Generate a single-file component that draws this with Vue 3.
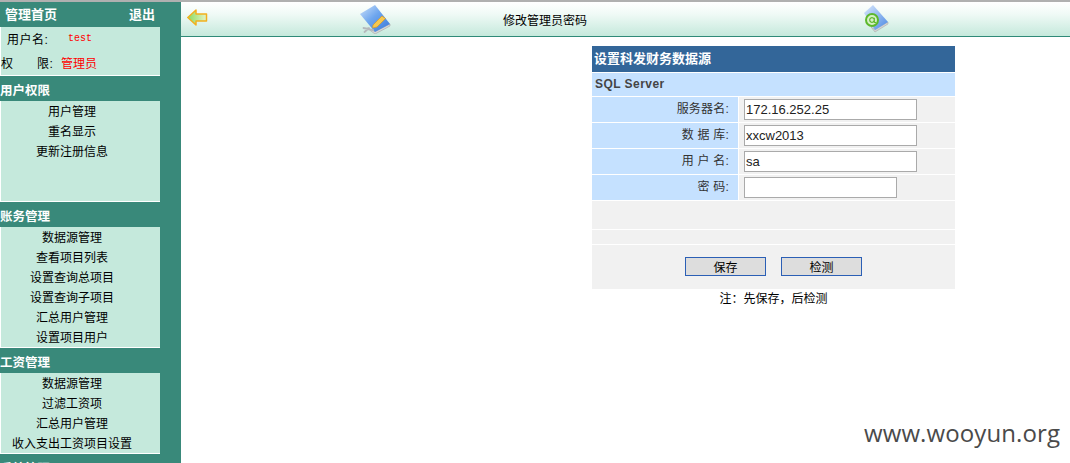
<script setup>
const groups = [
  { title: '用户权限', items: ['用户管理', '重名显示', '更新注册信息'], extra: true },
  { title: '账务管理', items: ['数据源管理', '查看项目列表', '设置查询总项目', '设置查询子项目', '汇总用户管理', '设置项目用户'] },
  { title: '工资管理', items: ['数据源管理', '过滤工资项', '汇总用户管理', '收入支出工资项目设置'] },
]
const rows = [
  { label: '服务器名:', value: '172.16.252.25' },
  { label: '数 据 库:', value: 'xxcw2013' },
  { label: '用 户 名:', value: 'sa' },
  { label: '密 码:', value: '', short: true, type: 'password' },
]
const note = '注\uFF1A先保存\uFF0C后检测'
</script>

<template>
  <div class="page">
    <aside class="side">
      <div class="home"><span>管理首页</span><span>退出</span></div>
      <div class="panel who">
        <div class="who-row"><span class="who-label">用户名:</span><span class="test">test</span></div>
        <div class="who-row"><span class="quan">权</span><span class="xian">限:</span><span class="role">管理员</span></div>
      </div>
      <template v-for="g in groups" :key="g.title">
        <div class="group-title">{{ g.title }}</div>
        <div class="panel" :class="{ extra: g.extra }">
          <div v-for="(it, i) in g.items" :key="i" class="link">{{ it }}</div>
        </div>
      </template>
      <div class="group-title">系统管理</div>
    </aside>

    <div class="right">
      <header class="bar">
        <svg class="arrow" width="21" height="18" viewBox="0 0 21 18">
          <defs>
            <linearGradient id="ag" x1="0" x2="1" y1="0" y2="0">
              <stop offset="0" stop-color="#8edb62" /><stop offset="1" stop-color="#e4f4c6" />
            </linearGradient>
          </defs>
          <path d="M.8 8.5 L9 1 V5 H19.5 V12 H9 V16 Z" fill="url(#ag)" stroke="#f2b01e" stroke-width="1.5" stroke-linejoin="round" />
        </svg>
        <svg class="book" width="31" height="30" viewBox="0 -1 31 30">
          <defs>
            <linearGradient id="b1" x1="0" x2="1" y1="0" y2="1">
              <stop offset="0" stop-color="#cfe2fa" /><stop offset=".45" stop-color="#6ea6ee" /><stop offset="1" stop-color="#3a78d8" />
            </linearGradient>
          </defs>
          <path d="M7 23 L15 29 L30 21 L30 19 L15 26.5 Z" fill="#d8d8d8" stroke="#a5a5a5" stroke-width=".6" />
          <path d="M0 9 L15 0 L30 19 L15 27 Z" fill="url(#b1)" />
          <path d="M13 20 L22 11 L25.5 13.5 L17 22 L12.5 23 Z" fill="#f6c850" stroke="#d89a24" stroke-width=".7" />
          <path d="M3.5 23 L13 25 M4.5 27 L9 23" stroke="#b4b8bc" stroke-width="1.8" stroke-linecap="round" fill="none" />
        </svg>
        <span class="bar-title">修改管理员密码</span>
        <svg class="book2" width="28" height="28" viewBox="0 0 28 28">
          <defs>
            <linearGradient id="b2" x1="0" x2="1" y1="0" y2="1">
              <stop offset="0" stop-color="#dbe9fc" /><stop offset="1" stop-color="#4a88e4" />
            </linearGradient>
          </defs>
          <path d="M8 22 L12 27 L25 19 L25 17 L12 24.5 Z" fill="#d4d4d4" stroke="#a0a0a0" stroke-width=".5" />
          <path d="M1 8 L10 0 L25 17 L12 25 Z" fill="url(#b2)" />
          <circle cx="9" cy="15" r="6" fill="#d6efc6" stroke="#5cb82c" stroke-width="2" />
          <path d="M11.3 12.8 V16.5 Q11.3 18 13 17.3 M11.3 15 A2.3 2.3 0 1 1 11.3 14.9" fill="none" stroke="#5cb82c" stroke-width="1.2" />
        </svg>
      </header>

      <main class="main">
        <section class="form">
          <div class="form-head">设置科发财务数据源</div>
          <div class="form-sub">SQL Server</div>
          <div v-for="r in rows" :key="r.label" class="row">
            <label class="label">{{ r.label }}</label>
            <div class="value">
              <input class="field" :class="{ short: r.short }" :type="r.type || 'text'" :value="r.value" />
            </div>
          </div>
          <div class="blank b1"></div>
          <div class="blank b2"></div>
          <div class="actions">
            <button class="btn" type="button">保存</button>
            <button class="btn" type="button">检测</button>
          </div>
          <p class="note">{{ note }}</p>
        </section>
      </main>
    </div>

    <div class="mark">www.wooyun.org</div>
  </div>
</template>

<style>
html, body { margin: 0; background: #fff; overflow: hidden; }
</style>

<style scoped>
.page {
  position: relative;
  display: flex;
  width: 1070px;
  height: 463px;
  overflow: hidden;
  font-family: "Liberation Sans", "Noto Sans CJK SC", sans-serif;
  font-size: 12px;
  color: #000;
  background: #fff;
  border-top: 2px solid #b0b0b0;
  box-sizing: border-box;
}
.side {
  flex: none;
  width: 181px;
  background: #39897a;
  overflow: hidden;
}
.home {
  display: flex;
  justify-content: space-between;
  height: 25px;
  line-height: 25px;
  padding: 0 26px 0 5px;
  color: #fff;
  font-size: 13px;
  font-weight: 700;
}
.panel {
  width: 142px;
  background: #c5e9dc;
  border-left: 1px solid #fff;
  border-bottom: 1px solid #fff;
  padding-right: 17px;
}
.panel.extra { height: 100px; }
.who { height: 48px; }
.who-row { display: flex; align-items: center; height: 24px; position: relative; top: -1px; }
.who-label { margin-left: 6px; width: 61px; letter-spacing: .5px; white-space: nowrap; }
.test { color: #f00; font-family: "Liberation Mono", monospace; font-size: 10px; }
.quan { width: 36px; }
.xian { width: 24px; letter-spacing: .5px; white-space: nowrap; }
.role { color: #f00; }
.group-title {
  height: 25px;
  line-height: 30px;
  color: #fff;
  font-size: 12.5px;
  font-weight: 700;
  white-space: nowrap;
}
.link { height: 20px; line-height: 22px; text-align: center; }
.right { flex: 1; min-width: 0; display: flex; flex-direction: column; }
.bar {
  flex: none;
  display: grid;
  grid-template-columns: 173px 143px 360px 1fr;
  align-items: center;
  height: 34px;
  padding-left: 6px;
  background: linear-gradient(#ffffff, #f0faf6 35%, #c5e9dc);
  border-bottom: 1px solid #2f8a78;
}
.arrow { margin-bottom: 3px; }
.bar-title { font-size: 12px; }
.main { flex: 1; padding: 9px 0 0 411px; }
.form { width: 363px; }
.form-head {
  height: 26px;
  line-height: 25px;
  padding-left: 2px;
  background: #336699;
  color: #fff;
  font-size: 13px;
  font-weight: 700;
}
.form-sub {
  height: 23px;
  line-height: 23px;
  margin-top: 1px;
  padding-left: 3px;
  background: #c5e1ff;
  color: #444;
  font-weight: 700;
  letter-spacing: .45px;
}
.row {
  display: grid;
  grid-template-columns: 146px 1fr;
  column-gap: 1px;
  height: 25px;
  margin-top: 1px;
}
.label {
  background: #c5e1ff;
  color: #333;
  line-height: 25px;
  text-align: right;
  padding-right: 9px;
  white-space: pre;
  letter-spacing: .2px;
}
.value { background: #f1f1f1; padding: 2px 0 0 5px; }
.field {
  display: block;
  width: 173px;
  height: 21px;
  box-sizing: border-box;
  padding: 0 1px;
  border: 1px solid #aaa;
  background: #fff;
  color: #222;
  font: 13px "Liberation Sans", sans-serif;
  outline: none;
}
.field.short { width: 153px; }
.blank { background: #f1f1f1; margin-top: 1px; }
.b1 { height: 28px; }
.b2 { height: 14px; }
.actions {
  display: flex;
  justify-content: center;
  gap: 15px;
  height: 44px;
  margin-top: 1px;
  padding-top: 12px;
  box-sizing: border-box;
  background: #f1f1f1;
}
.btn {
  width: 81px;
  height: 19px;
  padding: 0;
  border: 1px solid #2b5fb5;
  background: #ddd;
  color: #000;
  font: 12px "Liberation Sans", "Noto Sans CJK SC", sans-serif;
}
.note { margin: 0; height: 20px; line-height: 20px; text-align: center; }
.mark {
  position: absolute;
  left: 864px;
  top: 414px;
  color: #4a4a4a;
  font: 24px "Open Sans", sans-serif;
  letter-spacing: .1px;
}
</style>
